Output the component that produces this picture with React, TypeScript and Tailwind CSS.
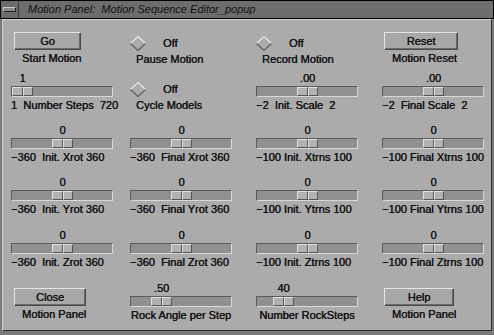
import type { ReactNode } from 'react';

// Motif-ish look: plain greys, bevels drawn with borders
const TXT =
  "font-['Liberation_Sans',Arial,sans-serif] text-[11px] leading-[13px] text-[#111] [text-shadow:0.35px_0_0_#111]";

const TRAVEL = 79; // trough inner width 100 - thumb 21

type ScaleProps = {
  value: string;
  frac: number;
  label: string;
  center?: boolean;
};

function Scale({ value, frac, label, center }: ScaleProps) {
  const pos = Math.round(frac * TRAVEL);
  return (
    <div className={`flex w-[102px] flex-col ${TXT}`}>
      <div className="h-[14px]" style={{ paddingLeft: pos + 1 }}>
        <div className="flex w-[21px] justify-center whitespace-nowrap">{value}</div>
      </div>
      <div className="flex h-[11px] w-[102px] border border-b-[#d8d8d8] border-l-[#5c5c5c] border-r-[#d8d8d8] border-t-[#5c5c5c] bg-[#909090]">
        <div className="flex h-full w-[21px]" style={{ marginLeft: pos }}>
          <div className="h-full flex-1 border border-b-[#555] border-l-[#e2e2e2] border-r-[#555] border-t-[#e2e2e2] bg-[#b2b2b2]" />
          <div className="h-full flex-1 border border-b-[#555] border-l-[#e2e2e2] border-r-[#555] border-t-[#e2e2e2] bg-[#b2b2b2]" />
        </div>
      </div>
      <div className={`mt-[2px] h-[13px] whitespace-pre ${center ? 'text-center' : ''}`}>{label}</div>
    </div>
  );
}

function PushButton({ text, label, w }: { text: string; label: string; w: string }) {
  return (
    <div className={`flex flex-col pl-[3px] ${TXT}`}>
      <div
        className={`flex h-[18px] ${w} items-center justify-center border border-b-[#4a4a4a] border-l-[#e6e6e6] border-r-[#4a4a4a] border-t-[#e6e6e6] bg-[#a8a8a8] shadow-[inset_-1px_-1px_0_#6a6a6a]`}
      >
        {text}
      </div>
      <div className="mt-[2px] h-[13px] whitespace-nowrap pl-[8px]">{label}</div>
    </div>
  );
}

function Diamond() {
  return (
    <svg width="16" height="15" viewBox="0 0 16 15">
      <path d="M0.5 7.5 L8 0.5 L15.5 7.5" fill="none" stroke="#e8e8e8" strokeWidth="1.2" />
      <path d="M0.5 7.5 L8 14.5 L15.5 7.5" fill="none" stroke="#5e5e5e" strokeWidth="1.2" />
    </svg>
  );
}

function Toggle({ label, pt }: { label: string; pt: string }) {
  return (
    <div className={`flex flex-col ${pt} ${TXT}`}>
      <div className="flex h-[16px] items-center">
        <Diamond />
        <span className="ml-[17px]">Off</span>
      </div>
      <div className="mt-[2px] h-[13px] whitespace-nowrap pl-[6px]">{label}</div>
    </div>
  );
}

function Row({ h, children }: { h: string; children: ReactNode }) {
  return (
    <div className={`grid ${h} grid-cols-[119px_126px_126px_102px] items-start`}>{children}</div>
  );
}

export default function App() {
  return (
    <div className="flex h-[335px] w-[494px] flex-col bg-[#7a7a7a] pb-[4px]">
      {/* title bar */}
      <div className="flex h-[19px] border border-black bg-[#6d6d6d]">
        <div className="flex w-[18px] items-center justify-center border-r border-[#3a3a3a]">
          <div className="h-[5px] w-[13px] border border-b-[#222] border-l-[#c8c8c8] border-r-[#222] border-t-[#c8c8c8] bg-[#8a8a8a]" />
        </div>
        <div
          className={`flex items-center pl-[9px] italic ${TXT} text-[11.5px] [text-shadow:none]`}
        >
          Motion Panel:&nbsp; Motion Sequence Editor_popup
        </div>
      </div>

      <div className="mx-[2px] flex flex-1 flex-col border border-b-[#2e2e2e] border-l-[#d0d0d0] border-r-[#2e2e2e] border-t-[#d0d0d0] bg-[#ababab] pl-[8px] pt-[12px]">
        <Row h="h-[40px]">
          <PushButton text="Go" label="Start Motion" w="w-[67px]" />
          <Toggle label="Pause Motion" pt="pt-[3px]" />
          <Toggle label="Record Motion" pt="pt-[3px]" />
          <div className="-ml-[1px]">
            <PushButton text="Reset" label="Motion Reset" w="w-[74px]" />
          </div>
        </Row>
        <Row h="h-[52px]">
          <Scale value="1" frac={0} label="1  Number Steps  720" />
          <Toggle label="Cycle Models" pt="pt-[9px]" />
          <Scale value=".00" frac={0.5} label="−2  Init. Scale  2" />
          <Scale value=".00" frac={0.5} label="−2  Final Scale  2" />
        </Row>
        <Row h="h-[52px]">
          <Scale value="0" frac={0.5} label="−360  Init. Xrot 360" />
          <Scale value="0" frac={0.5} label="−360  Final Xrot 360" />
          <Scale value="0" frac={0.5} label="−100 Init. Xtrns 100" />
          <Scale value="0" frac={0.5} label="−100 Final Xtrns 100" />
        </Row>
        <Row h="h-[53px]">
          <Scale value="0" frac={0.5} label="−360  Init. Yrot 360" />
          <Scale value="0" frac={0.5} label="−360  Final Yrot 360" />
          <Scale value="0" frac={0.5} label="−100 Init. Ytrns 100" />
          <Scale value="0" frac={0.5} label="−100 Final Ytrns 100" />
        </Row>
        <Row h="h-[53px]">
          <Scale value="0" frac={0.5} label="−360  Init. Zrot 360" />
          <Scale value="0" frac={0.5} label="−360  Final Zrot 360" />
          <Scale value="0" frac={0.5} label="−100 Init. Ztrns 100" />
          <Scale value="0" frac={0.5} label="−100 Final Ztrns 100" />
        </Row>
        <Row h="h-[40px]">
          <div className="pt-[6px]">
            <PushButton text="Close" label="Motion Panel" w="w-[72px]" />
          </div>
          <Scale value=".50" frac={0.25} label="Rock Angle per Step" center />
          <Scale value="40" frac={0.2} label="Number RockSteps" center />
          <div className="-ml-[1px] pt-[6px]">
            <PushButton text="Help" label="Motion Panel" w="w-[70px]" />
          </div>
        </Row>
      </div>
    </div>
  );
}
